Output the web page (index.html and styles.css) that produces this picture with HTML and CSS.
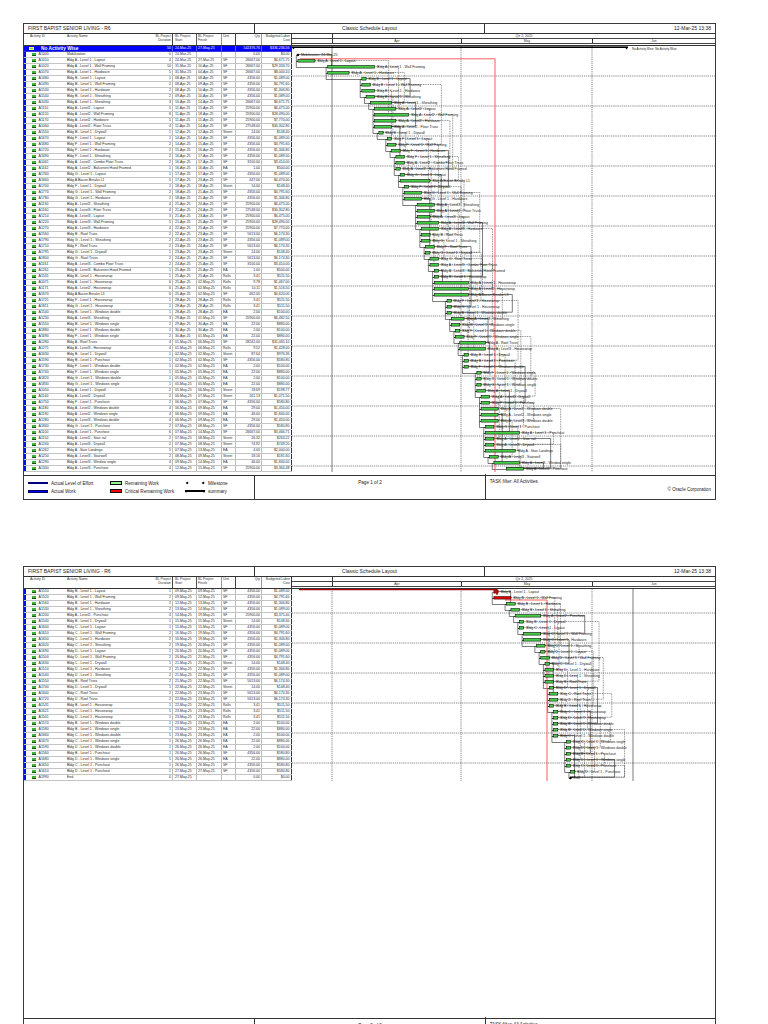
FILE: index.html
```html
<!DOCTYPE html>
<html>
<head>
<meta charset="utf-8">
<title>Classic Schedule Layout</title>
<link rel="stylesheet" href="styles.css">
</head>
<body>
<div class="sheet">

  <section class="page">
    <header class="titlebar">
      <div class="tcell">FIRST BAPIST SENIOR LIVING - R6</div>
      <div class="tcell mid">Classic Schedule Layout</div>
      <div class="tcell right">12-Mar-25 13:38</div>
    </header>
    <div class="main">
      <div class="table">
        <div class="thead cols">
          <span class="h-strip"></span>
          <span class="h-id">Activity ID</span>
          <span class="h-nm">Activity Name</span>
          <span class="h-du">BL Project<br>Duration</span>
          <span class="h-st">BL Project<br>Start</span>
          <span class="h-fi">BL Project<br>Finish</span>
          <span class="h-un">Unit</span>
          <span class="h-qt">Qty</span>
          <span class="h-co">Budgeted Labor<br>Cost</span>
        </div>
        <div class="tbody">
          <div class="row group cols">
            <span class="c-strip"></span>
            <span class="g-name"><i class="gico"></i>No Activity Wise</span>
            <span class="c-du">50</span>
            <span class="c-st">24-Mar-25</span>
            <span class="c-fi">27-May-25</span>
            <span class="c-un"></span>
            <span class="c-qt">542376.76</span>
            <span class="c-co">$336,236.56</span>
          </div>
          <div id="rows1"></div>
        </div>
      </div>
      <div class="gantt">
        <div class="ghead">
          <div class="qrow"><span class="q1"></span><span class="q2">Qtr 2, 2025</span></div>
          <div class="mrow"><span class="m-mar"></span><span class="m-apr">Apr</span><span class="m-may">May</span><span class="m-jun">Jun</span></div>
        </div>
        <svg class="gbody" id="g1" viewBox="292 46 423 429" width="423" height="429"></svg>
      </div>
    </div>
    <footer class="legend">
      <div class="lbox keys">
        <span class="k-loe"></span><span>Actual Level of Effort</span>
        <span class="k-rem"></span><span>Remaining Work</span>
        <span class="k-ms"><i></i><i></i></span><span>Milestone</span>
        <span class="k-aw"></span><span>Actual Work</span>
        <span class="k-crit"></span><span>Critical Remaining Work</span>
        <span class="k-sum"></span><span>summary</span>
      </div>
      <div class="lbox pg">Page 1 of 2</div>
      <div class="lbox info"><span>TASK filter: All Activities</span><span class="copy">© Oracle Corporation</span></div>
    </footer>
  </section>

  <section class="page">
    <header class="titlebar">
      <div class="tcell">FIRST BAPIST SENIOR LIVING - R6</div>
      <div class="tcell mid">Classic Schedule Layout</div>
      <div class="tcell right">12-Mar-25 13:38</div>
    </header>
    <div class="main">
      <div class="table">
        <div class="thead cols">
          <span class="h-strip"></span>
          <span class="h-id">Activity ID</span>
          <span class="h-nm">Activity Name</span>
          <span class="h-du">BL Project<br>Duration</span>
          <span class="h-st">BL Project<br>Start</span>
          <span class="h-fi">BL Project<br>Finish</span>
          <span class="h-un">Unit</span>
          <span class="h-qt">Qty</span>
          <span class="h-co">Budgeted Labor<br>Cost</span>
        </div>
        <div class="tbody">
          <div id="rows2"></div>
        </div>
      </div>
      <div class="gantt">
        <div class="ghead">
          <div class="qrow"><span class="q1"></span><span class="q2">Qtr 2, 2025</span></div>
          <div class="mrow"><span class="m-mar"></span><span class="m-apr">Apr</span><span class="m-may">May</span><span class="m-jun">Jun</span></div>
        </div>
        <svg class="gbody" id="g2" viewBox="292 46 423 429" width="423" height="429"></svg>
      </div>
    </div>
    <footer class="legend">
      <div class="lbox keys">
        <span class="k-loe"></span><span>Actual Level of Effort</span>
        <span class="k-rem"></span><span>Remaining Work</span>
        <span class="k-ms"><i></i><i></i></span><span>Milestone</span>
        <span class="k-aw"></span><span>Actual Work</span>
        <span class="k-crit"></span><span>Critical Remaining Work</span>
        <span class="k-sum"></span><span>summary</span>
      </div>
      <div class="lbox pg">Page 2 of 2</div>
      <div class="lbox info"><span>TASK filter: All Activities</span><span class="copy">© Oracle Corporation</span></div>
    </footer>
  </section>

</div>
<script src="script.js"></script>
</body>
</html>
```

FILE: styles.css
```css
* { box-sizing: border-box; margin: 0; padding: 0; }
body { margin: 0; background: #fff; font-family: "Liberation Sans", Arial, sans-serif; color: #222; }
.sheet { padding: 23px 0 0 23px; }

.page { width: 693px; height: 477px; border: 1px solid #3a3a3a; display: flex; flex-direction: column; background: #fff; overflow: hidden; }
.page + .page { margin-top: 66px; }

.titlebar { height: 10px; flex: none; display: grid; grid-template-columns: 1fr 1fr 1fr; border-bottom: 1px solid #333; font-size: 5px; line-height: 9px; color: #222; }
.tcell { padding: 0 4px; white-space: nowrap; overflow: hidden; }
.tcell.mid { text-align: center; border-left: 1px solid #333; border-right: 1px solid #333; }
.tcell.right { text-align: right; }

.main { display: flex; height: 441px; flex: none; }
.table { width: 268px; flex: none; }
.cols { display: grid; grid-template-columns: 2px 40px 86px 21px 24px 25px 14px 26px 30px; }

.thead { height: 12px; border-bottom: 1px solid #333; font-size: 3.4px; line-height: 3.7px; color: #333; }
.thead > span { padding-top: 1px; white-space: nowrap; overflow: hidden; }
.h-id { padding-left: 4px; }
.h-nm { padding-left: 1px; }
.h-du { text-align: right; padding-right: 1px; border-right: 1px solid #444; }
.h-st { padding-left: 2px; border-right: 1px solid #555; }
.h-fi { padding-left: 1px; border-right: 1px solid #999; }
.h-un { padding-left: 1px; border-right: 1px solid #444; }
.h-qt { text-align: right; padding-right: 1px; border-right: 1px solid #999; }
.h-co { text-align: right; padding-right: 1px; border-right: 1px solid #333; }

.tbody { height: 429px; }
.row { height: 6px; border-bottom: 1px solid #c4c4c4; font-size: 3.5px; line-height: 5px; color: #2a2a2a; }
.row > span { white-space: nowrap; overflow: hidden; }
.c-strip { background: #0010f0; }
.c-id { padding-left: 6px; display: flex; align-items: center; }
.ico { display: block; flex: none; width: 4px; height: 2.4px; margin-right: 2.6px; background: #3cb33c; border-bottom: 0.8px solid #0c5a0c; }
.c-nm { padding-left: 1px; }
.c-du { text-align: right; padding-right: 1px; border-right: 1px solid #bdbdbd; }
.c-st { padding-left: 2px; border-right: 1px solid #bdbdbd; }
.c-fi { padding-left: 1px; border-right: 1px solid #bdbdbd; }
.c-un { padding-left: 1px; border-right: 1px solid #bdbdbd; }
.c-qt { text-align: right; padding-right: 1px; border-right: 1px solid #bdbdbd; }
.c-co { text-align: right; padding-right: 1.5px; border-right: 1px solid #333; }

.row.group { background: #0000ff; color: #fff; border-bottom: 1px solid #3b3bd0; }
.row.group .c-du, .row.group .c-st, .row.group .c-fi, .row.group .c-un, .row.group .c-qt { border-right-color: #5a5aff; }
.g-name { grid-column: 2 / 4; display: flex; align-items: center; padding-left: 3px; font-size: 4.8px; font-weight: bold; line-height: 5px; }
.gico { display: block; width: 5px; height: 3.5px; margin-right: 7px; background: #66cc44; border: 0.6px solid #ffee66; }

.gantt { width: 423px; flex: none; }
.ghead { height: 12px; border-bottom: 1px solid #333; font-size: 3.4px; color: #333; }
.qrow, .mrow { display: flex; height: 5px; line-height: 4px; border-bottom: 1px solid #444; }
.qrow span, .mrow span { display: block; text-align: center; white-space: nowrap; }
.q1 { width: 40px; }
.q2 { width: 383px; border-left: 1px solid #333; }
.m-mar { width: 40px; }
.m-apr { width: 129px; border-left: 1px solid #333; }
.m-may { width: 131px; border-left: 1px solid #333; }
.m-jun { width: 123px; border-left: 1px solid #333; }
.gbody { display: block; }

.gl { stroke: #222; stroke-width: 0.6; }
.gd { stroke: #222; stroke-width: 0.55; stroke-dasharray: 1.2 0.9; }
.rd { fill: none; stroke: #111; stroke-width: 0.45; stroke-dasharray: 1 0.7; }
.rs { fill: none; stroke: #111; stroke-width: 0.55; }
.bar { fill: #46cf46; stroke: #000; stroke-width: 0.55; }
.bar.crit { fill: #e00000; stroke: #300000; }
.ms { fill: #000; }
.lbl { font-size: 3.5px; fill: #222; font-family: "Liberation Sans", Arial, sans-serif; }
.sumlbl { font-size: 3px; fill: #222; font-family: "Liberation Sans", Arial, sans-serif; }
.red { fill: none; stroke: #ff4b4b; stroke-width: 0.9; }
.red2 { fill: none; stroke: #b00000; stroke-width: 1.3; }

.legend { height: 24px; flex: none; border-top: 1px solid #333; display: grid; grid-template-columns: 1fr 1fr 1fr; font-size: 4.6px; color: #222; }
.lbox + .lbox { border-left: 1px solid #333; }
.keys { display: grid; grid-template-columns: 20px 56px 12px 57px 20px auto; grid-template-rows: 8px 8px; column-gap: 3px; align-items: center; padding: 3px 0 0 4px; white-space: nowrap; }
.k-loe { height: 1.8px; background: #000080; }
.k-aw { height: 3px; background: #0000ff; border: 0.6px solid #000060; }
.k-rem { height: 4px; background: #8ff58f; border: 0.8px solid #111; }
.k-crit { height: 4px; background: #ff0000; border: 0.8px solid #111; }
.k-ms { display: flex; justify-content: space-between; padding: 0 1px; }
.k-ms i { display: block; width: 2.4px; height: 2.4px; background: #000; transform: rotate(45deg); }
.k-sum { height: 2.2px; background: #000; position: relative; }
.k-sum::before, .k-sum::after { content: ""; position: absolute; top: 1.5px; border-left: 1.5px solid transparent; border-right: 1.5px solid transparent; border-top: 2px solid #000; }
.k-sum::before { left: 0; }
.k-sum::after { right: 0; }
.pg { text-align: center; padding-top: 4px; }
.info { display: flex; flex-direction: column; padding: 4px 4px 0 4px; line-height: 8px; margin-top: -2px; }
.copy { text-align: right; }
```

FILE: script.js
```js
(function () {
  var P1 = [
    ["A1000","Mobilization","0","24-Mar-25","","","0.00","$0.00"],
    ["A1010","Bldg A - Level 1 - Layout","4","24-Mar-25","27-Mar-25","SF","26667.00","$6,671.75"],
    ["A1020","Bldg A - Level 1 - Wall Framing","10","31-Mar-25","10-Apr-25","SF","26667.00","$29,333.70"],
    ["A1070","Bldg A - Level 1 - Hardware","5","31-Mar-25","04-Apr-25","SF","26667.00","$8,000.10"],
    ["A1480","Bldg B - Level 1 - Layout","1","08-Apr-25","08-Apr-25","SF","4356.00","$1,089.00"],
    ["A1490","Bldg B - Level 1 - Wall Framing","2","08-Apr-25","09-Apr-25","SF","4356.00","$4,791.60"],
    ["A1530","Bldg B - Level 1 - Hardware","2","08-Apr-25","10-Apr-25","SF","4356.00","$1,306.80"],
    ["A1540","Bldg B - Level 1 - Sheathing","2","09-Apr-25","10-Apr-25","SF","4356.00","$1,089.00"],
    ["A1030","Bldg A - Level 1 - Sheathing","3","10-Apr-25","14-Apr-25","SF","26667.00","$6,671.75"],
    ["A1110","Bldg A - Level2 - Layout","5","11-Apr-25","15-Apr-25","SF","25900.00","$6,475.00"],
    ["A1120","Bldg A - Level2 - Wall Framing","8","11-Apr-25","18-Apr-25","SF","25900.00","$28,490.00"],
    ["A1170","Bldg A - Level2 - Hardware","5","11-Apr-25","15-Apr-25","SF","25900.00","$7,770.00"],
    ["A1060","Bldg A - Level2 - Floor Truss","4","11-Apr-25","14-Apr-25","SF","27548.00","$30,302.80"],
    ["A1550","Bldg B - Level 1 - Drywall","1","12-Apr-25","12-Apr-25","Sheet","14.00","$148.40"],
    ["A1670","Bldg F - Level 1 - Layout","1","14-Apr-25","14-Apr-25","SF","4356.00","$1,089.00"],
    ["A1680","Bldg F - Level 1 - Wall Framing","2","14-Apr-25","15-Apr-25","SF","4356.00","$4,791.60"],
    ["A1720","Bldg F - Level 1 - Hardware","2","15-Apr-25","16-Apr-25","SF","4356.00","$1,306.80"],
    ["A1690","Bldg F - Level 1 - Sheathing","2","16-Apr-25","17-Apr-25","SF","4356.00","$1,089.00"],
    ["A1061","Bldg A - Level2 - Combo Floor Truss","2","16-Apr-25","17-Apr-25","SF","3100.00","$3,410.00"],
    ["A1162","Bldg A - Level2 - Balconies Hand Framed","1","16-Apr-25","16-Apr-25","EA","1.00","$500.00"],
    ["A1760","Bldg G - Level 1 - Layout","1","17-Apr-25","17-Apr-25","SF","4356.00","$1,089.00"],
    ["A1660","Bldg A Bacon Breaks L1","5","17-Apr-25","23-Apr-25","SF","447.00","$4,470.00"],
    ["A1700","Bldg F - Level 1 - Drywall","1","18-Apr-25","18-Apr-25","Sheet","14.00","$148.40"],
    ["A1770","Bldg G - Level 1 - Wall Framing","2","18-Apr-25","21-Apr-25","SF","4356.00","$4,791.60"],
    ["A1780","Bldg G - Level 1 - Hardware","2","18-Apr-25","21-Apr-25","SF","4356.00","$1,306.80"],
    ["A1130","Bldg A - Level2 - Sheathing","4","21-Apr-25","24-Apr-25","SF","25900.00","$6,475.00"],
    ["A1160","Bldg A - Level3 - Floor Truss","4","21-Apr-25","24-Apr-25","SF","27548.00","$30,302.80"],
    ["A1210","Bldg A - Level3 - Layout","3","21-Apr-25","23-Apr-25","SF","25900.00","$6,475.00"],
    ["A1220","Bldg A - Level3 - Wall Framing","5","21-Apr-25","25-Apr-25","SF","25900.00","$28,490.00"],
    ["A1270","Bldg A - Level3 - Hardware","4","22-Apr-25","25-Apr-25","SF","25900.00","$7,770.00"],
    ["A1560","Bldg B - Roof Truss","2","22-Apr-25","23-Apr-25","SF","5613.00","$6,174.30"],
    ["A1790","Bldg G - Level 1 - Sheathing","2","22-Apr-25","23-Apr-25","SF","4356.00","$1,089.00"],
    ["A1710","Bldg F - Roof Truss","2","23-Apr-25","24-Apr-25","SF","5613.00","$6,174.30"],
    ["A1795","Bldg G - Level 1 - Drywall","1","23-Apr-25","23-Apr-25","Sheet","14.00","$148.40"],
    ["A1800","Bldg G - Roof Truss","2","24-Apr-25","25-Apr-25","SF","5613.00","$6,174.30"],
    ["A1161","Bldg A - Level3 - Combo Floor Truss","2","24-Apr-25","25-Apr-25","SF","3100.00","$3,410.00"],
    ["A1261","Bldg A - Level3 - Balconies Hand Framed","1","25-Apr-25","25-Apr-25","EA","1.00","$500.00"],
    ["A1531","Bldg B - Level 1 - Housewrap","1","25-Apr-25","25-Apr-25","Rolls","3.41","$511.50"],
    ["A1071","Bldg A - Level 1 - Housewrap","6","25-Apr-25","02-May-25","Rolls","9.78","$1,467.00"],
    ["A1171","Bldg A - Level2 - Housewrap","6","25-Apr-25","02-May-25","Rolls","10.11","$1,516.50"],
    ["A1670","Bldg A Bacon Breaks L3","6","25-Apr-25","02-May-25","SF","462.00","$4,620.00"],
    ["A1721","Bldg F - Level 1 - Housewrap","1","28-Apr-25","28-Apr-25","Rolls","3.41","$511.50"],
    ["A1811","Bldg G - Level 1 - Housewrap","1","28-Apr-25","28-Apr-25","Rolls","3.41","$511.50"],
    ["A1540","Bldg B - Level 1 - Windows double","1","28-Apr-25","28-Apr-25","EA","2.00","$100.00"],
    ["A1230","Bldg A - Level3 - Sheathing","3","29-Apr-25","01-May-25","SF","25900.00","$6,482.50"],
    ["A1550","Bldg B - Level 1 - Windows single","2","29-Apr-25","30-Apr-25","EA","22.00","$880.00"],
    ["A1880","Bldg F - Level 1 - Windows double","1","30-Apr-25","30-Apr-25","EA","2.00","$100.00"],
    ["A1690","Bldg F - Level 1 - Windows single","2","30-Apr-25","01-May-25","EA","22.00","$880.00"],
    ["A1280","Bldg A - Roof Truss","4","01-May-25","06-May-25","SF","28241.00","$31,065.10"],
    ["A1271","Bldg A - Level3 - Housewrap","4","01-May-25","06-May-25","Rolls","9.52","$1,428.00"],
    ["A1630","Bldg B - Level 1 - Drywall","1","02-May-25","02-May-25","Sheet","87.64","$976.36"],
    ["A1590","Bldg B - Level 1 - Punchout","1","02-May-25","02-May-25","SF","4356.00","$580.80"],
    ["A1730","Bldg F - Level 1 - Windows double","1","02-May-25","02-May-25","EA","2.00","$100.00"],
    ["A1740","Bldg F - Level 1 - Windows single","1","05-May-25","05-May-25","EA","22.00","$880.00"],
    ["A1820","Bldg G - Level 1 - Windows double","1","05-May-25","05-May-25","EA","2.00","$100.00"],
    ["A1830","Bldg G - Level 1 - Windows single","1","05-May-25","05-May-25","EA","22.00","$880.00"],
    ["A1050","Bldg A - Level 1 - Drywall","2","05-May-25","06-May-25","Sheet","18.69","$198.77"],
    ["A1140","Bldg A - Level2 - Drywall","2","06-May-25","07-May-25","Sheet","161.13","$1,071.50"],
    ["A1750","Bldg F - Level 1 - Punchout","2","06-May-25","07-May-25","SF","4356.00","$580.80"],
    ["A1180","Bldg A - Level2 - Windows double","4","06-May-25","09-May-25","EA","29.00","$1,450.00"],
    ["A1190","Bldg A - Level2 - Windows single","4","06-May-25","09-May-25","EA","46.00","$1,840.00"],
    ["A1280","Bldg A - Level3 - Windows double","4","06-May-25","09-May-25","EA","29.00","$1,450.00"],
    ["A1840","Bldg G - Level 1 - Punchout","2","07-May-25","08-May-25","SF","4356.00","$580.80"],
    ["A1100","Bldg A - Level 1 - Punchout","6","07-May-25","14-May-25","SF","26667.00","$3,466.71"],
    ["A1150","Bldg A - Level2 - Stair rail","2","07-May-25","08-May-25","Sheet","26.32","$263.22"],
    ["A1240","Bldg A - Level3 - Drywall","2","07-May-25","08-May-25","Sheet","74.92","$749.20"],
    ["A1262","Bldg A - Stair Landings","5","07-May-25","13-May-25","EA","4.00","$2,000.00"],
    ["A1250","Bldg A - Level3 - Stairwell","2","08-May-25","09-May-25","Sheet","18.16","$181.60"],
    ["A1290","Bldg A - Level3 - Window single","4","09-May-25","14-May-25","EA","46.00","$1,840.00"],
    ["A1300","Bldg A - Level3 - Punchout","4","12-May-25","15-May-25","SF","25900.00","$3,364.48"]
  ];
  var P2 = [
    ["A1510","Bldg B - Level 1 - Layout","1","09-May-25","09-May-25","SF","4356.00","$1,089.00"],
    ["A1520","Bldg B - Level 1 - Wall Framing","2","09-May-25","12-May-25","SF","4356.00","$4,791.60"],
    ["A1560","Bldg B - Level 1 - Hardware","2","12-May-25","13-May-25","SF","4356.00","$1,306.80"],
    ["A1530","Bldg B - Level 1 - Sheathing","2","13-May-25","14-May-25","SF","4356.00","$1,089.00"],
    ["A1200","Bldg A - Level2 - Punchout","4","14-May-25","19-May-25","SF","25900.00","$3,375.40"],
    ["A1540","Bldg B - Level 1 - Drywall","1","15-May-25","15-May-25","Sheet","14.00","$148.40"],
    ["A1600","Bldg C - Level 1 - Layout","1","15-May-25","15-May-25","SF","4356.00","$1,089.00"],
    ["A1610","Bldg C - Level 1 - Wall Framing","2","16-May-25","19-May-25","SF","4356.00","$4,791.60"],
    ["A1650","Bldg C - Level 1 - Hardware","2","16-May-25","19-May-25","SF","4356.00","$1,306.80"],
    ["A1620","Bldg C - Level 1 - Sheathing","2","19-May-25","20-May-25","SF","4356.00","$1,089.00"],
    ["A1690","Bldg D - Level 1 - Layout","1","20-May-25","20-May-25","SF","4356.00","$1,089.00"],
    ["A1500","Bldg D - Level 1 - Wall Framing","2","20-May-25","21-May-25","SF","4356.00","$4,791.60"],
    ["A1630","Bldg C - Level 1 - Drywall","1","21-May-25","21-May-25","Sheet","14.00","$148.40"],
    ["A1510","Bldg D - Level 1 - Hardware","2","21-May-25","22-May-25","SF","4356.00","$1,306.80"],
    ["A1540","Bldg D - Level 1 - Sheathing","2","21-May-25","22-May-25","SF","4356.00","$1,089.00"],
    ["A1550","Bldg B - Roof Truss","2","21-May-25","22-May-25","SF","5613.00","$6,174.30"],
    ["A1700","Bldg D - Level 1 - Drywall","1","22-May-25","22-May-25","Sheet","14.00","$148.40"],
    ["A1640","Bldg C - Roof Truss","2","22-May-25","23-May-25","SF","5613.00","$6,174.30"],
    ["A1720","Bldg D - Roof Truss","2","22-May-25","23-May-25","SF","5613.00","$6,174.30"],
    ["A1531","Bldg B - Level 1 - Housewrap","1","22-May-25","22-May-25","Rolls","3.41","$511.50"],
    ["A1621","Bldg C - Level 1 - Housewrap","1","23-May-25","23-May-25","Rolls","3.41","$511.50"],
    ["A1501","Bldg D - Level 1 - Housewrap","1","23-May-25","23-May-25","Rolls","3.41","$511.50"],
    ["A1570","Bldg B - Level 1 - Windows double","1","23-May-25","23-May-25","EA","2.00","$100.00"],
    ["A1580","Bldg B - Level 1 - Windows single","1","23-May-25","23-May-25","EA","22.00","$880.00"],
    ["A1660","Bldg C - Level 1 - Windows double","1","23-May-25","23-May-25","EA","2.00","$100.00"],
    ["A1670","Bldg C - Level 1 - Windows single","1","26-May-25","26-May-25","EA","22.00","$880.00"],
    ["A1590","Bldg D - Level 1 - Windows double","1","26-May-25","26-May-25","EA","2.00","$100.00"],
    ["A1560","Bldg B - Level 1 - Punchout","1","26-May-25","26-May-25","SF","4356.00","$580.80"],
    ["A1680","Bldg D - Level 1 - Windows single","1","26-May-25","26-May-25","EA","22.00","$880.00"],
    ["A1650","Bldg C - Level 1 - Punchout","1","26-May-25","26-May-25","SF","4356.00","$580.80"],
    ["A1610","Bldg D - Level 1 - Punchout","1","27-May-25","27-May-25","SF","4356.00","$580.80"],
    ["A1990","End","0","27-May-25","","","0.00","$0.00"]
  ];

  var NS = "http://www.w3.org/2000/svg";
  var MB = { Mar: -31, Apr: 0, May: 30, Jun: 61 };
  var PX = 4.26;
  function X(s) { var p = s.split("-"); return 332 + (MB[p[1]] + (+p[0]) - 1) * PX; }
  function el(svg, tag, a, txt) {
    var e = document.createElementNS(NS, tag);
    for (var k in a) e.setAttribute(k, a[k]);
    if (txt != null) e.textContent = txt;
    svg.appendChild(e);
    return e;
  }

  function fill(id, rows) {
    var box = document.getElementById(id);
    var cls = ["c-strip","c-id","c-nm","c-du","c-st","c-fi","c-un","c-qt","c-co"];
    rows.forEach(function (r) {
      var d = document.createElement("div");
      d.className = "row cols";
      var vals = [""].concat(r);
      cls.forEach(function (c, j) {
        var s = document.createElement("span");
        s.className = c;
        if (j === 1) { var ic = document.createElement("i"); ic.className = "ico"; s.appendChild(ic); }
        s.appendChild(document.createTextNode(vals[j]));
        d.appendChild(s);
      });
      box.appendChild(d);
    });
  }

  function gantt(id, rows, y0, firstH, opts) {
    var svg = document.getElementById(id);
    var bottom = y0 + rows.length * 6;
    el(svg, "line", { x1: 332, y1: 46, x2: 332, y2: bottom, "class": opts.solid ? "gl" : "gd" });
    [461, 592].forEach(function (x) { el(svg, "line", { x1: x, y1: 46, x2: x, y2: bottom, "class": "gd" }); });
    if (opts.finish) el(svg, "line", { x1: opts.finish, y1: 46, x2: opts.finish, y2: bottom, "class": "gl" });
    for (var y = firstH; y < bottom; y += 30) el(svg, "line", { x1: 292, y1: y, x2: 715, y2: y, "class": "gd" });

    var geo = rows.map(function (r, i) {
      var top = y0 + i * 6, ms = r[2] === "0", x1 = X(r[3]);
      var x2 = ms ? x1 : X(r[4]) + PX;
      return { top: top, yc: top + 3, x1: x1, x2: x2, ms: ms };
    });

    geo.forEach(function (g, i) {
      var s = i + 2 + ((i * 7) % 9);
      if (s >= geo.length) s = geo.length - 1;
      if (s <= i) return;
      var t = geo[s];
      var xr = Math.max(g.x2 + 4, t.x1 + 4) + ((i * 13) % 6) * 10;
      el(svg, "path", { d: "M" + g.x2 + " " + (g.yc - 0.5) + "H" + xr + "V" + (t.yc - 0.8) + "H" + t.x1, "class": (i % 4 === 0) ? "rs" : "rd" });
    });
    geo.forEach(function (g, i) {
      if (i === 0) return;
      var p = geo[i - 1];
      var xl = Math.min(p.x1, g.x1) - 1.6;
      el(svg, "path", { d: "M" + p.x1 + " " + (p.yc + 0.5) + "H" + xl + "V" + (g.yc + 0.5) + "H" + g.x1, "class": "rs" });
    });

    if (opts.extra) opts.extra(svg);

    geo.forEach(function (g, i) {
      var r = rows[i];
      if (g.ms) {
        el(svg, "path", { d: "M" + g.x1 + " " + (g.yc - 1.6) + "l1.6 1.6l-1.6 1.6l-1.6 -1.6z", "class": "ms" });
        el(svg, "text", { x: g.x1 + 3, y: g.top + 4.2, "class": "lbl" }, opts.msLabel && i === 0 ? opts.msLabel : r[1]);
      } else {
        var crit = opts.crit && opts.crit.indexOf(i) >= 0;
        el(svg, "rect", { x: g.x1, y: g.top + 1.5, width: g.x2 - g.x1, height: 2.6, "class": crit ? "bar crit" : "bar" });
        el(svg, "text", { x: g.x2 + 2.5, y: g.top + 4.2, "class": "lbl" }, r[1]);
      }
    });
  }

  fill("rows1", P1);
  fill("rows2", P2);

  gantt("g1", P1, 52, 76, {
    solid: true,
    msLabel: "Mobilization, 24-Mar-25",
    extra: function (svg) {
      el(svg, "rect", { x: 292, y: 46.4, width: 336, height: 1.6, "class": "ms" });
      el(svg, "path", { d: "M292 47.5l1.4 2l1.4 -2z M628 47.5l-1.4 2l-1.4 -2z", "class": "ms" });
      el(svg, "text", { x: 632, y: 49.6, "class": "sumlbl" }, "No Activity Wise: No Activity Wise");
      el(svg, "path", { d: "M300 58.8H495V472", "class": "red" });
    }
  });

  gantt("g2", P2, 46, 70, {
    solid: false,
    finish: 633,
    crit: [0, 1],
    extra: function (svg) {
      el(svg, "path", { d: "M299 46.6H497V52", "class": "red2" });
      el(svg, "path", { d: "M505 57H547V238", "class": "red" });
    }
  });
})();
```
